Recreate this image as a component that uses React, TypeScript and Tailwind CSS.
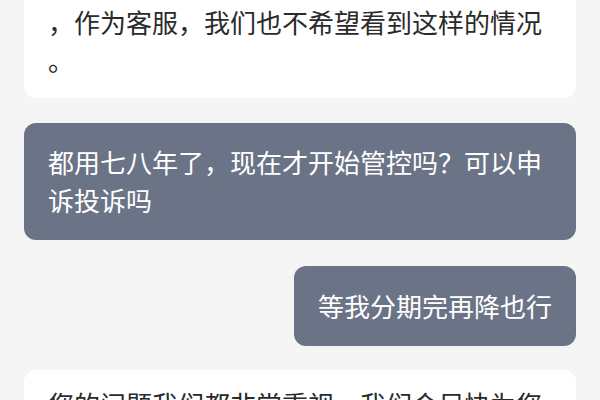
const FONT = '"Noto Sans CJK SC", "Noto Sans", sans-serif'

type Msg = { side: 'in' | 'out'; lines: string[] }

const messages: Msg[] = [
	{ side: 'out', lines: ['都用七八年了，现在才开始管控吗？可以申', '诉投诉吗'] },
	{ side: 'out', lines: ['等我分期完再降也行'] },
]

const Lines = ({ lines }: { lines: string[] }) => (
	<>
		{lines.map((l, i) => (
			<div key={i} className="whitespace-nowrap">
				{l}
			</div>
		))}
	</>
)

export default function App() {
	return (
		<div
			className="h-[400px] w-[600px] overflow-hidden bg-[#f5f5f5] px-6"
			style={{ fontFamily: FONT }}
		>
			{/* reply from support, top part scrolled away */}
			<div className="-mt-[55px] rounded-xl bg-white px-6 pt-5 pb-[19px] text-[26px] leading-[38px] text-[#2a2a2a]">
				<Lines lines={['非常抱歉给您带来了不好的使用体验', '，作为客服，我们也不希望看到这样的情况', '。']} />
			</div>

			<div className="mt-[25px] flex flex-col gap-[26px]">
				{messages.map((m, i) => (
					<div key={i} className={m.side === 'out' ? 'flex justify-end' : 'flex'}>
						<div
							className={
								m.lines.length > 1
									? 'w-full rounded-xl bg-[#6b7386] px-6 pt-5 pb-[21px] text-[26px] leading-[38px] text-white'
									: 'rounded-xl bg-[#6b7386] px-6 py-[21px] text-[26px] leading-[38px] text-white'
							}
						>
							<Lines lines={m.lines} />
						</div>
					</div>
				))}
			</div>

			<div className="mt-[24px] rounded-xl bg-white px-6 pt-[15px] pb-5 text-[26px] leading-[38px] text-[#2a2a2a]">
				<Lines lines={['您的问题我们都非常重视，我们会尽快为您', '处理，请您耐心等待']} />
			</div>
		</div>
	)
}
